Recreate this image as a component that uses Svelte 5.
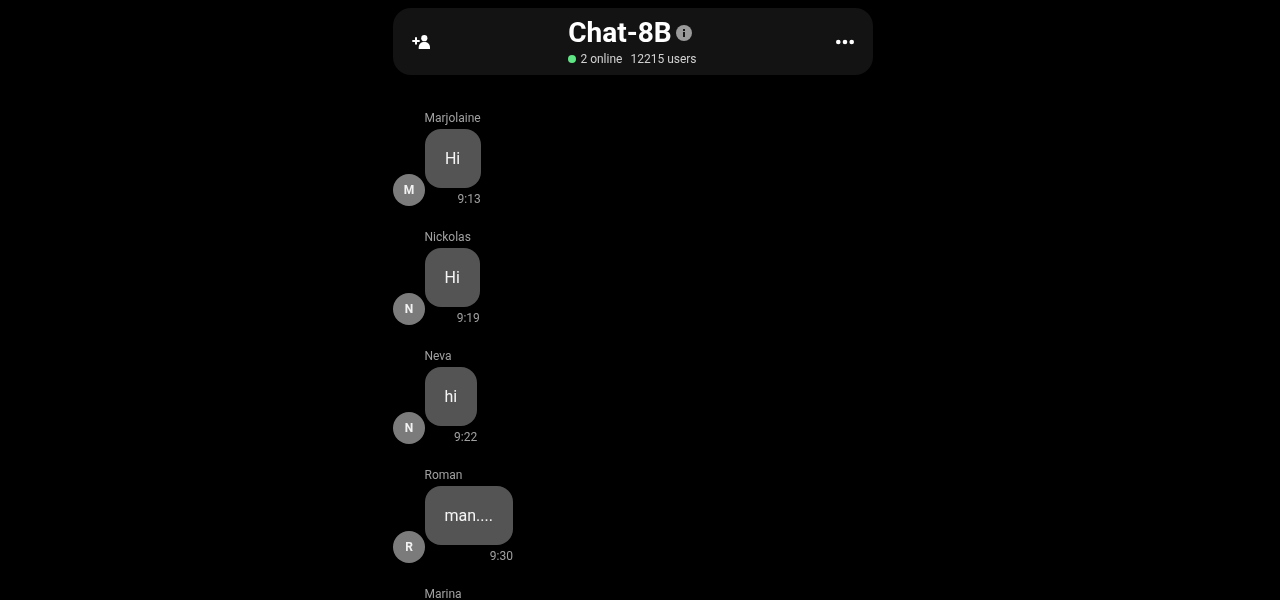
<script lang="ts">
  const messages = [
    { name: "Marjolaine", text: "Hi", time: "9:13" },
    { name: "Nickolas", text: "Hi", time: "9:19" },
    { name: "Neva", text: "hi", time: "9:22" },
    { name: "Roman", text: "man....", time: "9:30" },
    { name: "Marina", text: "", time: "" },
  ];
</script>

<div class="page">
  <div class="column">
    <header>
      <button class="icon" aria-label="Add user">
        <svg width="20" height="20" viewBox="0 0 20 20" fill="#fff">
          <circle cx="13.300" cy="6.200" r="3.100" />
          <path d="M7.700 17v-1.500C7.700 12 10 10 13.300 10s5.700 2 5.700 5.500V17z" />
          <path d="M4 5.200h2v2.700h2.700v2H6v2.700H4V9.900H1.300v-2H4z" />
        </svg>
      </button>
      <div class="title">
        <div class="title-row">
          <h1>Chat-8B</h1>
          <svg class="info" width="16" height="16" viewBox="0 0 16 16">
            <circle cx="8" cy="8" r="8" fill="#9a9a9a" />
            <rect x="7" y="7" width="2" height="5" fill="#161616" />
            <rect x="7" y="4" width="2" height="2" fill="#161616" />
          </svg>
        </div>
        <div class="status">
          <span class="dot"></span>
          <span>2 online</span>
          <span class="users">12215 users</span>
        </div>
      </div>
      <button class="icon" aria-label="More">
        <svg width="20" height="20" viewBox="0 0 20 20" fill="#fff">
          <circle cx="3.300" cy="10" r="2.300" />
          <circle cx="10" cy="10" r="2.300" />
          <circle cx="16.700" cy="10" r="2.300" />
        </svg>
      </button>
    </header>

    <div class="messages">
      {#each messages as m}
        <div class="message">
          <div class="avatar">{m.text ? m.name[0] : ""}</div>
          <div class="body">
            <div class="name">{m.name}</div>
            {#if m.text}
              <div class="bubble">{m.text}</div>
              <div class="time">{m.time}</div>
            {/if}
          </div>
        </div>
      {/each}
    </div>
  </div>
</div>

<style>
  :global(body) {
    background: #000;
    overflow: hidden;
  }

  .page {
    height: 600px;
    overflow: hidden;
    padding-right: 14px;
    background: #000;
    color: #fff;
    font-family: Roboto, "Liberation Sans", sans-serif;
  }

  .column {
    width: 480px;
    margin: 0 auto;
    padding-top: 8px;
    will-change: transform;
  }

  header {
    height: 67px;
    display: flex;
    align-items: center;
    justify-content: space-between;
    padding: 0 18px;
    background: #131313;
    border-radius: 18px;
  }

  .icon {
    width: 20px;
    height: 20px;
    padding: 0;
    border: 0;
    background: none;
    display: flex;
  }

  .title {
    display: flex;
    flex-direction: column;
    align-items: center;
    gap: 2px;
    padding-bottom: 2px;
  }

  .title-row {
    display: flex;
    align-items: center;
    gap: 4px;
    height: 34px;
    margin-right: 6px;
  }

  h1 {
    margin: 0;
    font-size: 28px;
    line-height: 34px;
    font-weight: 700;
  }

  .status {
    display: flex;
    align-items: center;
    margin-right: 1px;
    font-size: 12px;
    line-height: 14px;
    color: #d0d0d0;
  }

  .dot {
    width: 8px;
    height: 8px;
    margin-right: 4px;
    border-radius: 50%;
    background: #5fe584;
  }

  .users {
    margin-left: 8px;
  }

  .messages {
    display: flex;
    flex-direction: column;
    gap: 24px;
    padding-top: 36px;
  }

  .message {
    display: flex;
    align-items: flex-end;
    min-height: 95px;
  }

  .avatar {
    width: 32px;
    height: 32px;
    margin-right: -0.5px;
    border-radius: 50%;
    background: #7b7b7b;
    color: #f2f2f2;
    font-size: 12px;
    font-weight: 700;
    display: flex;
    align-items: center;
    justify-content: center;
  }

  .body {
    align-self: flex-start;
    display: flex;
    flex-direction: column;
    align-items: stretch;
  }

  .name {
    font-size: 12px;
    line-height: 14px;
    color: #a0a0a0;
    margin-bottom: 4px;
  }

  .bubble {
    padding: 20px;
    font-size: 16px;
    line-height: 19px;
    background: #545454;
    color: #f5f5f5;
    border-radius: 16px;
    text-align: center;
  }

  .time {
    font-size: 12px;
    line-height: 14px;
    margin-top: 4px;
    color: #a0a0a0;
    text-align: right;
  }
</style>
